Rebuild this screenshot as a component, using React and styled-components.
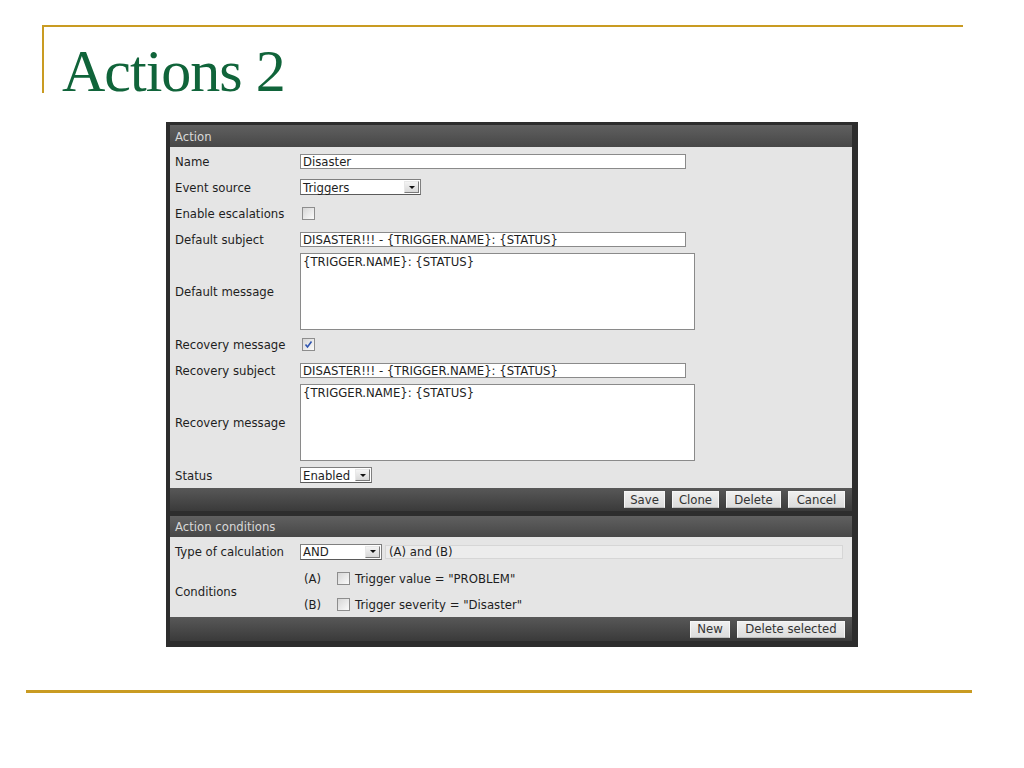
import React from 'react';
import styled, { createGlobalStyle } from 'styled-components';

const Global = createGlobalStyle`
  html, body { margin: 0; padding: 0; background: #fff; }
  body { width: 1024px; height: 768px; overflow: hidden; }
`;

const Slide = styled.div`
  width: 1024px;
  height: 768px;
  display: flex;
  flex-direction: column;
`;

const TitleFrame = styled.div`
  margin: 25px 0 0 42px;
  width: 921px;
  height: 68px;
  box-sizing: border-box;
  border-top: 2px solid #c99b22;
  border-left: 2px solid #c99b22;
  padding: 14px 0 0 18px;
`;

const Title = styled.h1`
  margin: 0;
  font-family: "Liberation Serif", serif;
  font-weight: normal;
  font-size: 60px;
  line-height: 60px;
  letter-spacing: -1px;
  color: #10643a;
`;

const Panel = styled.div`
  margin: 29px 0 0 166px;
  width: 692px;
  box-sizing: border-box;
  background: #2d2d2d;
  padding: 3px 6px 6px 4px;
  font-family: "DejaVu Sans", sans-serif;
  font-size: 11.7px;
  color: #1e1e1e;
`;

const SectionHeader = styled.div`
  height: ${p => p.$h}px;
  display: flex;
  align-items: center;
  padding: 1px 0 0 5px;
  box-sizing: border-box;
  background: linear-gradient(#606060, #474747);
  color: #d8d8d8;
`;

const Content = styled.div`
  background: #e5e5e5;
  padding-top: 1px;
`;

const Row = styled.div`
  display: grid;
  grid-template-columns: 130px 1fr;
  align-items: center;
  height: ${p => p.$h}px;
`;

const Label = styled.div`
  padding: 1px 0 0 5px;
  white-space: nowrap;
`;

const Field = styled.div`
  display: flex;
  align-items: center;
  min-width: 0;
`;

const Footer = styled.div`
  height: ${p => p.$h}px;
  display: flex;
  justify-content: flex-end;
  align-items: center;
  gap: 7px;
  padding-right: 7px;
  background: linear-gradient(#585858, #3a3a3a);
`;

const Gap = styled.div`
  height: 5px;
`;

const Button = styled.div`
  width: ${p => p.$w}px;
  height: 17px;
  box-sizing: border-box;
  display: flex;
  align-items: center;
  justify-content: center;
  background: linear-gradient(#efefef, #dcdcdc);
  border: 1px solid #f6f6f6;
  border-bottom-color: #bdbdbd;
  color: #333;
  white-space: nowrap;
`;

const TextInput = styled.div`
  width: ${p => p.$w}px;
  height: 15px;
  box-sizing: border-box;
  border: 1px solid #8a8a8a;
  background: #fff;
  padding: 1px 0 0 2px;
  display: flex;
  align-items: center;
  white-space: nowrap;
  overflow: hidden;
`;

const TextArea = styled.div`
  width: 395px;
  height: 77px;
  box-sizing: border-box;
  border: 1px solid #8a8a8a;
  background: #fff;
  padding: 1px 2px;
  white-space: nowrap;
`;

const SelectBox = styled.div`
  width: ${p => p.$w}px;
  height: 16px;
  box-sizing: border-box;
  border: 1px solid #7f7f7f;
  border-bottom-color: #5a5a5a;
  background: #fff;
  display: flex;
`;

const SelectText = styled.span`
  flex: 1;
  padding: 1px 0 0 2px;
  display: flex;
  align-items: center;
`;

const SelectButton = styled.span`
  width: 15px;
  margin: 1px;
  box-sizing: border-box;
  border: 1px solid #e8e8e8;
  border-right-color: #7a7a7a;
  border-bottom-color: #7a7a7a;
  background: linear-gradient(#f4f4f4, #d8d8d8);
  display: flex;
  align-items: center;
  justify-content: center;
`;

const Arrow = styled.span`
  width: 0;
  height: 0;
  border-left: 3px solid transparent;
  border-right: 3px solid transparent;
  border-top: 3px solid #111;
`;

const Box = styled.span`
  width: 13px;
  height: 13px;
  box-sizing: border-box;
  margin-left: ${p => p.$ml || 0}px;
  border: 1px solid #8d8d8d;
  background: linear-gradient(135deg, #d6d6d6, #fbfbfb);
  display: flex;
  align-items: center;
  justify-content: center;
`;

const CalcBox = styled.div`
  flex: 1;
  margin: 0 9px 0 3px;
  height: 14px;
  box-sizing: border-box;
  border: 1px solid #d6d6d6;
  background: #ececec;
  padding: 1px 0 0 3px;
  display: flex;
  align-items: center;
`;

const CondGrid = styled.div`
  display: grid;
  grid-template-columns: 130px 1fr;
  align-items: center;
`;

const CondList = styled.div`
  display: flex;
  flex-direction: column;
`;

const CondLine = styled.div`
  height: 26px;
  display: flex;
  align-items: center;
`;

const CondTag = styled.span`
  width: 37px;
  padding: 1px 0 0 4px;
  box-sizing: border-box;
`;

const CondText = styled.span`
  margin-left: 5px;
  padding-top: 1px;
`;

const BottomRule = styled.div`
  margin: 43px 0 0 26px;
  width: 946px;
  height: 3px;
  background: #c99b22;
`;

const Select = ({ w, children }) => (
  <SelectBox $w={w}>
    <SelectText>{children}</SelectText>
    <SelectButton><Arrow /></SelectButton>
  </SelectBox>
);

const Checkbox = ({ checked, ml }) => (
  <Box $ml={ml}>
    {checked && (
      <svg width="9" height="9" viewBox="0 0 9 9">
        <path d="M1.5 4.5 L3.5 7 L7.5 1.5" fill="none" stroke="#2f55b0" strokeWidth="1.6" />
      </svg>
    )}
  </Box>
);

export default function App() {
  return (
    <Slide>
      <Global />
      <TitleFrame>
        <Title>Actions 2</Title>
      </TitleFrame>
      <Panel>
        <SectionHeader $h={22}>Action</SectionHeader>
        <Content>
          <Row $h={26}>
            <Label>Name</Label>
            <Field><TextInput $w={386}>Disaster</TextInput></Field>
          </Row>
          <Row $h={26}>
            <Label>Event source</Label>
            <Field><Select w={121}>Triggers</Select></Field>
          </Row>
          <Row $h={26}>
            <Label>Enable escalations</Label>
            <Field><Checkbox ml={2} /></Field>
          </Row>
          <Row $h={26}>
            <Label>Default subject</Label>
            <Field><TextInput $w={386}>DISASTER!!! - {'{TRIGGER.NAME}'}: {'{STATUS}'}</TextInput></Field>
          </Row>
          <Row $h={79}>
            <Label>Default message</Label>
            <Field><TextArea>{'{TRIGGER.NAME}'}: {'{STATUS}'}</TextArea></Field>
          </Row>
          <Row $h={26}>
            <Label>Recovery message</Label>
            <Field><Checkbox ml={2} checked /></Field>
          </Row>
          <Row $h={26}>
            <Label>Recovery subject</Label>
            <Field><TextInput $w={386}>DISASTER!!! - {'{TRIGGER.NAME}'}: {'{STATUS}'}</TextInput></Field>
          </Row>
          <Row $h={79}>
            <Label>Recovery message</Label>
            <Field><TextArea>{'{TRIGGER.NAME}'}: {'{STATUS}'}</TextArea></Field>
          </Row>
          <Row $h={26}>
            <Label>Status</Label>
            <Field><Select w={72}>Enabled</Select></Field>
          </Row>
        </Content>
        <Footer $h={23}>
          <Button $w={41}>Save</Button>
          <Button $w={47}>Clone</Button>
          <Button $w={55}>Delete</Button>
          <Button $w={57}>Cancel</Button>
        </Footer>
        <Gap />
        <SectionHeader $h={21}>Action conditions</SectionHeader>
        <Content>
          <Row $h={27}>
            <Label>Type of calculation</Label>
            <Field>
              <Select w={82}>AND</Select>
              <CalcBox>(A) and (B)</CalcBox>
            </Field>
          </Row>
          <CondGrid>
            <Label>Conditions</Label>
            <CondList>
              <CondLine>
                <CondTag>(A)</CondTag>
                <Checkbox />
                <CondText>Trigger value = "PROBLEM"</CondText>
              </CondLine>
              <CondLine>
                <CondTag>(B)</CondTag>
                <Checkbox />
                <CondText>Trigger severity = "Disaster"</CondText>
              </CondLine>
            </CondList>
          </CondGrid>
        </Content>
        <Footer $h={24}>
          <Button $w={40}>New</Button>
          <Button $w={108}>Delete selected</Button>
        </Footer>
      </Panel>
      <BottomRule />
    </Slide>
  );
}
